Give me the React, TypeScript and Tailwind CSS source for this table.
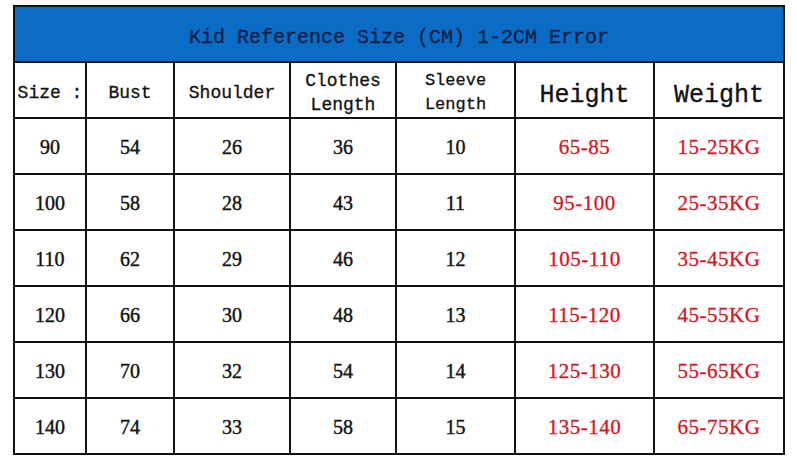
const rows = [
  ["90", "54", "26", "36", "10", "65-85", "15-25KG"],
  ["100", "58", "28", "43", "11", "95-100", "25-35KG"],
  ["110", "62", "29", "46", "12", "105-110", "35-45KG"],
  ["120", "66", "30", "48", "13", "115-120", "45-55KG"],
  ["130", "70", "32", "54", "14", "125-130", "55-65KG"],
  ["140", "74", "33", "58", "15", "135-140", "65-75KG"],
];

const widths = ["w-[72px]", "w-[88px]", "w-[116px]", "w-[106px]", "w-[119px]", "w-[139px]", "w-[130px]"];

const mono = "font-['Liberation_Mono',monospace]";
const serif = "font-['Liberation_Serif',serif]";
const cell = "border-2 border-[#111] font-normal";

export default function App() {
  return (
    <div className="w-[797px] h-[466px] bg-white pt-[5px] pl-[13px]">
      <table className="table-fixed border-collapse w-[771px]">
        <colgroup>
          {widths.map((w, i) => (
            <col key={i} className={w} />
          ))}
        </colgroup>
        <thead>
          <tr className="h-[56px]">
            <th
              colSpan={7}
              className={`${cell} bg-[#0a6cc4] text-[#0b1f4a] text-[20px] text-center pt-[8px] [-webkit-text-stroke:0.3px_#0b1f4a] ${mono}`}
            >
              Kid Reference Size (CM) 1-2CM Error
            </th>
          </tr>
          <tr className={`h-[56px] ${mono} text-[#111] [-webkit-text-stroke:0.3px_#111]`}>
            <th className={`${cell} text-[18px] whitespace-nowrap pt-[6px]`}>Size :</th>
            <th className={`${cell} text-[18px] pt-[6px]`}>Bust</th>
            <th className={`${cell} text-[18px] pt-[6px]`}>Shoulder</th>
            <th className={`${cell} text-[18px] leading-[24px] pt-[6px]`}>
              Clothes
              <br />
              Length
            </th>
            <th className={`${cell} text-[17px] leading-[24px] pt-[6px]`}>
              Sleeve
              <br />
              Length
            </th>
            <th className={`${cell} text-[25px] pt-[12px]`}>Height</th>
            <th className={`${cell} text-[25px] pt-[12px]`}>Weight</th>
          </tr>
        </thead>
        <tbody className={`${serif} text-[20px]`}>
          {rows.map((r) => (
            <tr key={r[0]} className="h-[56px]">
              {r.map((c, i) => (
                <td
                  key={i}
                  className={`${cell} text-center pt-[2px] ${
                    i >= 5
                      ? "text-[#d9141c] text-[21px] tracking-[0.5px] pt-[4px] [-webkit-text-stroke:0.3px_#d9141c]"
                      : "text-[#111] [-webkit-text-stroke:0.4px_#111]"
                  }`}
                >
                  {c}
                </td>
              ))}
            </tr>
          ))}
        </tbody>
      </table>
    </div>
  );
}
